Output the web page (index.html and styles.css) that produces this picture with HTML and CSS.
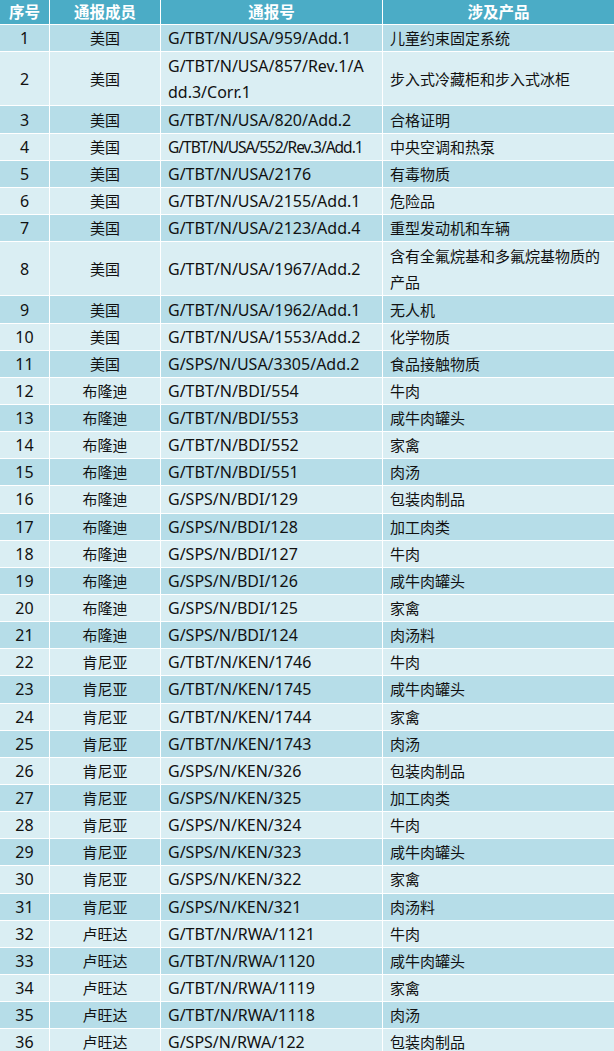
FILE: index.html
```html
<!DOCTYPE html>
<html lang="zh-CN">
<head>
<meta charset="utf-8">
<title>通报表</title>
<link rel="stylesheet" href="styles.css">
</head>
<body>
<table class="notice-table">
  <colgroup>
    <col class="c-no">
    <col class="c-member">
    <col class="c-code">
    <col class="c-product">
  </colgroup>
  <thead>
    <tr><th>序号</th><th>通报成员</th><th>通报号</th><th>涉及产品</th></tr>
  </thead>
  <tbody>
    <tr><td>1</td><td>美国</td><td class="code">G/TBT/N/USA/959/Add.1</td><td class="product">儿童约束固定系统</td></tr>
    <tr class="two-line"><td>2</td><td>美国</td><td class="code">G/TBT/N/USA/857/Rev.1/Add.3/Corr.1</td><td class="product">步入式冷藏柜和步入式冰柜</td></tr>
    <tr><td>3</td><td>美国</td><td class="code">G/TBT/N/USA/820/Add.2</td><td class="product">合格证明</td></tr>
    <tr><td>4</td><td>美国</td><td class="code narrow">G/TBT/N/USA/552/Rev.3/Add.1</td><td class="product">中央空调和热泵</td></tr>
    <tr><td>5</td><td>美国</td><td class="code">G/TBT/N/USA/2176</td><td class="product">有毒物质</td></tr>
    <tr><td>6</td><td>美国</td><td class="code">G/TBT/N/USA/2155/Add.1</td><td class="product">危险品</td></tr>
    <tr><td>7</td><td>美国</td><td class="code">G/TBT/N/USA/2123/Add.4</td><td class="product">重型发动机和车辆</td></tr>
    <tr class="two-line"><td>8</td><td>美国</td><td class="code">G/TBT/N/USA/1967/Add.2</td><td class="product">含有全氟烷基和多氟烷基物质的产品</td></tr>
    <tr><td>9</td><td>美国</td><td class="code">G/TBT/N/USA/1962/Add.1</td><td class="product">无人机</td></tr>
    <tr><td>10</td><td>美国</td><td class="code">G/TBT/N/USA/1553/Add.2</td><td class="product">化学物质</td></tr>
    <tr><td>11</td><td>美国</td><td class="code">G/SPS/N/USA/3305/Add.2</td><td class="product">食品接触物质</td></tr>
    <tr><td>12</td><td>布隆迪</td><td class="code">G/TBT/N/BDI/554</td><td class="product">牛肉</td></tr>
    <tr><td>13</td><td>布隆迪</td><td class="code">G/TBT/N/BDI/553</td><td class="product">咸牛肉罐头</td></tr>
    <tr><td>14</td><td>布隆迪</td><td class="code">G/TBT/N/BDI/552</td><td class="product">家禽</td></tr>
    <tr><td>15</td><td>布隆迪</td><td class="code">G/TBT/N/BDI/551</td><td class="product">肉汤</td></tr>
    <tr><td>16</td><td>布隆迪</td><td class="code">G/SPS/N/BDI/129</td><td class="product">包装肉制品</td></tr>
    <tr><td>17</td><td>布隆迪</td><td class="code">G/SPS/N/BDI/128</td><td class="product">加工肉类</td></tr>
    <tr><td>18</td><td>布隆迪</td><td class="code">G/SPS/N/BDI/127</td><td class="product">牛肉</td></tr>
    <tr><td>19</td><td>布隆迪</td><td class="code">G/SPS/N/BDI/126</td><td class="product">咸牛肉罐头</td></tr>
    <tr><td>20</td><td>布隆迪</td><td class="code">G/SPS/N/BDI/125</td><td class="product">家禽</td></tr>
    <tr><td>21</td><td>布隆迪</td><td class="code">G/SPS/N/BDI/124</td><td class="product">肉汤料</td></tr>
    <tr><td>22</td><td>肯尼亚</td><td class="code">G/TBT/N/KEN/1746</td><td class="product">牛肉</td></tr>
    <tr><td>23</td><td>肯尼亚</td><td class="code">G/TBT/N/KEN/1745</td><td class="product">咸牛肉罐头</td></tr>
    <tr><td>24</td><td>肯尼亚</td><td class="code">G/TBT/N/KEN/1744</td><td class="product">家禽</td></tr>
    <tr><td>25</td><td>肯尼亚</td><td class="code">G/TBT/N/KEN/1743</td><td class="product">肉汤</td></tr>
    <tr><td>26</td><td>肯尼亚</td><td class="code">G/SPS/N/KEN/326</td><td class="product">包装肉制品</td></tr>
    <tr><td>27</td><td>肯尼亚</td><td class="code">G/SPS/N/KEN/325</td><td class="product">加工肉类</td></tr>
    <tr><td>28</td><td>肯尼亚</td><td class="code">G/SPS/N/KEN/324</td><td class="product">牛肉</td></tr>
    <tr><td>29</td><td>肯尼亚</td><td class="code">G/SPS/N/KEN/323</td><td class="product">咸牛肉罐头</td></tr>
    <tr><td>30</td><td>肯尼亚</td><td class="code">G/SPS/N/KEN/322</td><td class="product">家禽</td></tr>
    <tr><td>31</td><td>肯尼亚</td><td class="code">G/SPS/N/KEN/321</td><td class="product">肉汤料</td></tr>
    <tr><td>32</td><td>卢旺达</td><td class="code">G/TBT/N/RWA/1121</td><td class="product">牛肉</td></tr>
    <tr><td>33</td><td>卢旺达</td><td class="code">G/TBT/N/RWA/1120</td><td class="product">咸牛肉罐头</td></tr>
    <tr><td>34</td><td>卢旺达</td><td class="code">G/TBT/N/RWA/1119</td><td class="product">家禽</td></tr>
    <tr><td>35</td><td>卢旺达</td><td class="code">G/TBT/N/RWA/1118</td><td class="product">肉汤</td></tr>
    <tr><td>36</td><td>卢旺达</td><td class="code">G/SPS/N/RWA/122</td><td class="product">包装肉制品</td></tr>
  </tbody>
</table>
</body>
</html>
```

FILE: styles.css
```css
html, body {
  margin: 0;
  padding: 0;
  background: #ffffff;
}

body {
  font-family: "Noto Sans", "Noto Sans CJK SC", sans-serif;
  font-size: 15px;
  color: #111111;
}

.notice-table {
  width: 614px;
  table-layout: fixed;
  border-collapse: separate;
  border-spacing: 0;
}

.c-no { width: 50px; }
.c-member { width: 111px; }
.c-code { width: 222px; }
.c-product { width: 231px; }

.notice-table th,
.notice-table td {
  padding: 0;
  border-right: 1px solid #ffffff;
  border-bottom: 1px solid #ffffff;
  text-align: center;
  vertical-align: middle;
  line-height: 26px;
  box-sizing: border-box;
}

.notice-table th:last-child,
.notice-table td:last-child {
  border-right: none;
}

.notice-table th {
  background: #4bacc6;
  color: #ffffff;
  font-weight: bold;
  font-size: 15.5px;
  height: 25px;
  line-height: 24px;
}

.notice-table td {
  height: 27.15px;
}

.notice-table tr.two-line td {
  height: 54.3px;
}

.notice-table tbody tr:nth-child(odd) td {
  background: #b6dde8;
}

.notice-table tbody tr:nth-child(even) td {
  background: #daeef3;
}

.notice-table td:first-child {
  font-size: 16px;
}

.notice-table td.code,
.notice-table td.product {
  text-align: left;
  padding-left: 7px;
  padding-right: 4px;
}

.notice-table td.code {
  font-size: 16px;
  padding-right: 12px;
  word-break: break-all;
}

.notice-table td.narrow {
  font-size: 15.5px;
  letter-spacing: -1px;
}
```
